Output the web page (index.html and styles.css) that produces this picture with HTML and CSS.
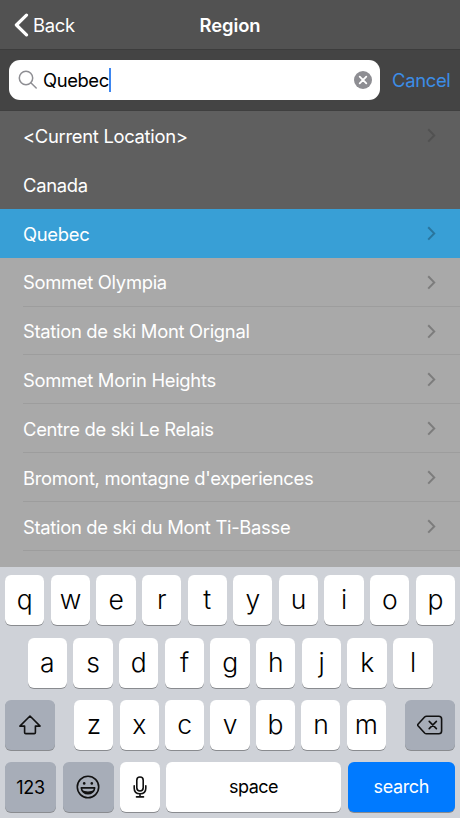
FILE: index.html
```html
<!DOCTYPE html>
<html lang="en">
<head>
  <meta charset="utf-8">
  <title>Region</title>
  <link rel="stylesheet" href="styles.css">
</head>
<body>
  <div class="app">
    <header class="navbar">
      <a class="back">
        <svg class="back-icon" width="15" height="24" viewBox="0 0 15 24"><path d="M12.5 2.1 2.4 12l10.1 9.9"/></svg>
        <span>Back</span>
      </a>
      <h1 class="title">Region</h1>
    </header>

    <div class="search-bar">
      <div class="search-field">
        <svg class="search-icon" width="20" height="20" viewBox="0 0 20 20"><circle cx="8" cy="8" r="6.7"/><path d="m12.8 12.8 5.4 5.2"/></svg>
        <span class="search-text">Quebec</span>
        <span class="cursor"></span>
        <svg class="clear-icon" width="18" height="18" viewBox="0 0 18 18"><circle cx="9" cy="9" r="9"/><path d="m5.7 5.7 6.6 6.6m0-6.6-6.6 6.6"/></svg>
      </div>
      <a class="cancel">Cancel</a>
    </div>

    <ul class="list">
      <li class="row dark"><span>&lt;Current Location&gt;</span><svg class="chevron" width="9" height="15" viewBox="0 0 9 15"><path d="m1.2 1.2 6 6.2-6 6.2"/></svg></li>
      <li class="row dark"><span>Canada</span></li>
      <li class="row selected"><span>Quebec</span><svg class="chevron" width="9" height="15" viewBox="0 0 9 15"><path d="m1.2 1.2 6 6.2-6 6.2"/></svg></li>
      <li class="row"><span>Sommet Olympia</span><svg class="chevron" width="9" height="15" viewBox="0 0 9 15"><path d="m1.2 1.2 6 6.2-6 6.2"/></svg></li>
      <li class="row"><span>Station de ski Mont Orignal</span><svg class="chevron" width="9" height="15" viewBox="0 0 9 15"><path d="m1.2 1.2 6 6.2-6 6.2"/></svg></li>
      <li class="row"><span>Sommet Morin Heights</span><svg class="chevron" width="9" height="15" viewBox="0 0 9 15"><path d="m1.2 1.2 6 6.2-6 6.2"/></svg></li>
      <li class="row"><span>Centre de ski Le Relais</span><svg class="chevron" width="9" height="15" viewBox="0 0 9 15"><path d="m1.2 1.2 6 6.2-6 6.2"/></svg></li>
      <li class="row"><span>Bromont, montagne d'experiences</span><svg class="chevron" width="9" height="15" viewBox="0 0 9 15"><path d="m1.2 1.2 6 6.2-6 6.2"/></svg></li>
      <li class="row"><span>Station de ski du Mont Ti-Basse</span><svg class="chevron" width="9" height="15" viewBox="0 0 9 15"><path d="m1.2 1.2 6 6.2-6 6.2"/></svg></li>
    </ul>

    <div class="keyboard">
      <div class="keys">
        <div class="key">q</div>
        <div class="key">w</div>
        <div class="key">e</div>
        <div class="key">r</div>
        <div class="key">t</div>
        <div class="key">y</div>
        <div class="key">u</div>
        <div class="key">i</div>
        <div class="key">o</div>
        <div class="key">p</div>
      </div>
      <div class="keys keys-middle">
        <div class="key">a</div>
        <div class="key">s</div>
        <div class="key">d</div>
        <div class="key">f</div>
        <div class="key">g</div>
        <div class="key">h</div>
        <div class="key">j</div>
        <div class="key">k</div>
        <div class="key">l</div>
      </div>
      <div class="keys">
        <div class="key gray shift">
          <svg width="24" height="22" viewBox="0 0 24 22"><path d="M12 2 1.9 12.1h4.7v6.3c0 .8.4 1.2 1.2 1.2h8.4c.8 0 1.2-.4 1.2-1.2v-6.3h4.7z"/></svg>
        </div>
        <div class="key">z</div>
        <div class="key">x</div>
        <div class="key">c</div>
        <div class="key">v</div>
        <div class="key">b</div>
        <div class="key">n</div>
        <div class="key">m</div>
        <div class="key gray delete">
          <svg width="26" height="20" viewBox="0 0 26 20"><path d="M9.5 1.2h12.3a2.8 2.8 0 0 1 2.8 2.8v12a2.8 2.8 0 0 1-2.8 2.8H9.5c-.8 0-1.4-.3-1.900-.8L1 10.800c-.5-.6-.5-1 0-1.600L7.600 2c.5-.5 1.100-.8 1.900-.8z"/><path d="m12.200 6.400 7.200 7.200m0-7.200-7.200 7.200"/></svg>
        </div>
      </div>
      <div class="keys">
        <div class="key gray numbers">123</div>
        <div class="key gray emoji">
          <svg width="24" height="24" viewBox="0 0 24 24"><circle cx="12" cy="12" r="10.700"/><circle class="fill" cx="8.200" cy="8.400" r="1.300"/><circle class="fill" cx="15.800" cy="8.400" r="1.300"/><path d="M5.300 12.900h13.400c-.4 3.400-3.200 5.900-6.700 5.900s-6.300-2.500-6.700-5.900z"/><path class="fill" d="M5.600 14.500c2 1.400 4.200 1.900 6.400 1.900s4.400-.5 6.400-1.900c-.9 2.700-3.300 4.300-6.400 4.300s-5.500-1.600-6.400-4.300z"/></svg>
        </div>
        <div class="key mic">
          <svg width="14" height="22" viewBox="0 0 14 22"><rect x="3.800" y="1" width="6.400" height="14" rx="3.200"/><path d="M1.200 9.800v2.400c0 3.300 2.300 5.500 5.800 5.500s5.800-2.200 5.800-5.500V9.800M7 17.700v3.200M3.500 20.900h7"/></svg>
        </div>
        <div class="key space">space</div>
        <div class="key search">search</div>
      </div>
    </div>
  </div>
</body>
</html>
```
FILE: styles.css
```css
* {
  box-sizing: border-box;
}

body {
  margin: 0;
  font-family: Inter, Roboto, sans-serif;
  font-size: 18.4px;
  letter-spacing: -0.3px;
  color: #fff;
}

svg {
  display: block;
  flex: none;
  fill: none;
  stroke-linecap: round;
  stroke-linejoin: round;
}

.app {
  width: 460px;
  height: 818px;
  overflow: hidden;
  display: flex;
  flex-direction: column;
  background: #a9a9a9;
}

/* top bar */
.navbar {
  display: grid;
  grid-template-columns: 1fr auto 1fr;
  align-items: center;
  height: 50px;
  flex: none;
  padding-left: 14px;
  background: #525252;
  border-bottom: 1px solid #3c3c3c;
}

.back {
  display: flex;
  align-items: center;
  gap: 4px;
}

.back-icon {
  stroke: #fff;
  stroke-width: 3.2;
}

.title {
  margin: 0 14px 0 0;
  font-size: 18.4px;
  font-weight: 600;
  letter-spacing: -0.1px;
}

.search-bar {
  display: flex;
  align-items: center;
  gap: 12px;
  height: 61px;
  flex: none;
  padding: 0 9px;
  background: #444;
  border-bottom: 1px solid #3f3f3f;
}

.search-field {
  display: flex;
  align-items: center;
  flex: none;
  width: 371px;
  height: 40px;
  padding: 0 8px 0 9px;
  background: #fff;
  border-radius: 11px;
  color: #000;
}

.search-icon {
  stroke: #8e8e93;
  stroke-width: 1.5;
  margin-right: 5px;
}

.search-text {
  letter-spacing: -0.4px;
}

.cursor {
  width: 2px;
  height: 24px;
  background: #3d86f0;
}

.clear-icon {
  margin-left: auto;
  fill: #8e8e93;
  stroke: none;
}

.clear-icon path {
  stroke: #fff;
  stroke-width: 1.8;
}

.cancel {
  color: #3c8de6;
}

/* regions */
.list {
  list-style: none;
  margin: 0;
  padding: 0;
  height: 456px;
  flex: none;
  overflow: hidden;
}

.row {
  display: flex;
  align-items: center;
  justify-content: space-between;
  height: 48.9px;
  padding-top: 1px;
  padding-right: 24px;
  margin-left: 23px;
  border-bottom: 1px solid #9d9d9d;
}

.row.dark,
.row.selected {
  margin-left: 0;
  padding-left: 23px;
  border-bottom: none;
}

.row.dark {
  background: #5f5f5f;
}

.row.selected {
  background: #389fd6;
}

.chevron {
  stroke: #000;
  stroke-width: 2;
  stroke-linecap: butt;
  stroke-linejoin: miter;
  opacity: 0.26;
}

.dark .chevron {
  opacity: 0.14;
}

/* keyboard */
.keyboard {
  flex: 1;
  display: flex;
  flex-direction: column;
  gap: 12.3px;
  padding: 8.3px 5px 0;
  background: #cfd2d8;
  color: #000;
}

.keys {
  display: flex;
  gap: 6.3px;
}

.keys-middle {
  padding: 0 22.5px;
}

.key {
  flex: 1;
  display: flex;
  align-items: center;
  justify-content: center;
  height: 50px;
  padding-bottom: 2px;
  background: #fff;
  border-radius: 6px;
  box-shadow: 0 1px 0 #898b8f;
  font-size: 26.5px;
  font-weight: 300;
}

.key svg {
  stroke: #111;
  stroke-width: 1.6;
}

.key svg .fill {
  fill: #111;
  stroke: none;
}

.key.gray {
  background: #a7adb8;
}

.key.shift,
.key.delete {
  flex: none;
  width: 50px;
  padding: 0;
}

.shift {
  margin-right: 13px;
}

.delete {
  margin-left: 13px;
}

.key.numbers,
.key.emoji {
  flex: none;
  width: 51px;
  padding: 0;
  font-size: 18px;
  font-weight: 400;
}

.numbers {
  margin-right: 0.7px;
}

.key.mic {
  flex: none;
  width: 39.3px;
  padding: 0;
}

.key.space,
.key.search {
  font-size: 18px;
  font-weight: 400;
  letter-spacing: -0.5px;
}

.key.search {
  flex: none;
  width: 107.5px;
  background: #007aff;
  color: #fff;
  letter-spacing: -0.4px;
}
```
